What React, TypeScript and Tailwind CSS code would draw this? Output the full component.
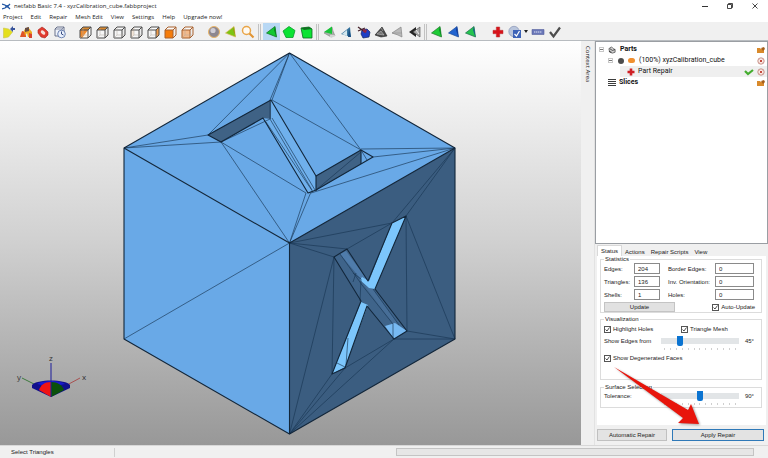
import React from "react";

const SANS = "font-['Open_Sans','Noto_Sans',sans-serif]";
const ARIAL = "font-['Liberation_Sans',Arial,sans-serif]";

function ToolButton({ label, active, children }: { label: string; active?: boolean; children: React.ReactNode }) {
  return (
    <button
      type="button"
      aria-label={label}
      className={`flex h-[17px] w-[17px] shrink-0 items-center justify-center ${active ? "bg-[#b8d8f4]" : ""}`}
    >
      <svg viewBox="0 0 14 14" className="h-[14px] w-[14px]">
        {children}
      </svg>
    </button>
  );
}

function ViewCube({ face }: { face: string }) {
  return (
    <>
      <path d="M2 5h8v8H2z" fill={face === "front" ? "#f57c0a" : face === "iso" ? "#f08a2c" : face === "fit" ? "#f3b98a" : "#f6f6f6"} />
      <path d="M2 5l3-3h8l-3 3z" fill={face === "top" || face === "iso" ? "#d9882e" : "#fafafa"} />
      <path d="M10 5l3-3v8l-3 3z" fill={face === "right" ? "#ee9a48" : face === "iso" ? "#ffffff" : "#ededed"} />
      {face === "iso" && <path d="M10 5v8H4z" fill="#fff3e4" />}
      {face === "left" && <path d="M2 5l3-3v8l-3 3z" fill="#f4e6d8" />}
      <path d="M2 5h8v8H2zM2 5l3-3h8l-3 3M13 2v8l-3 3" fill="none" stroke={face === "front" || face === "fit" ? "#a8602c" : "#4c4c4c"} strokeWidth="1" />
      {face !== "front" && <path d="M5 3v7h7M5 10l-3 3" fill="none" stroke="#b0a8a0" strokeWidth=".5" />}
    </>
  );
}

function Tri({ a, b, edge }: { a: string; b: string; edge: string }) {
  return (
    <>
      <path d="M1.500 8L10 1.500 11.500 12z" fill={a} stroke={edge} strokeWidth=".7" />
      <path d="M9 5L10 1.500 11.500 12z" fill={b} />
    </>
  );
}

function Separator() {
  return <div className="mx-0.5 h-4 w-[3px] shrink-0 border-x border-[#c2c2c2]" />;
}

function Toolbar() {
  return (
    <div role="toolbar" className="flex h-[19px] shrink-0 items-center overflow-hidden border-b border-[#b8bcc0] bg-[#f0f0f0] pt-px">
      <ToolButton label="Add part">
        <path d="M1.500 3l5 1 4 3-4 5-5 1z" fill="#e4df1c" stroke="#c9c44d" strokeWidth=".6" />
        <path d="M8 4l3-3v2h2v2h-2v2z" fill="#39549b" />
      </ToolButton>
      <ToolButton label="Library">
        <path d="M1 12l2-6 4 1v5z" fill="#df5426" />
        <path d="M5 5l4-3 4 5v5H9l-1-4-2 3z" fill="#edaa22" />
        <path d="M6 3l4-1v4l-4 1z" fill="#654c46" />
        <path d="M10 8l3 1v4h-3z" fill="#d9442f" />
      </ToolButton>
      <ToolButton label="Part repair">
        <path d="M2 5l4-3 3 2 3 3v3l-3 3-4-1-3-4z" fill="#e13b2f" stroke="#a4231c" strokeWidth=".6" />
        <ellipse cx="7" cy="7.500" rx="2.600" ry="1.700" transform="rotate(40 7 7.500)" fill="#f6ded8" />
      </ToolButton>
      <ToolButton label="History">
        <path d="M2 4l2-2h7v9H2z" fill="#eef2fa" stroke="#5b6480" strokeWidth=".9" />
        <path d="M2 4h7v7M9 4l2-2" fill="none" stroke="#5b6480" strokeWidth=".7" />
        <circle cx="8.500" cy="9" r="3.800" fill="#e9f0fc" stroke="#6077aa" strokeWidth=".9" />
        <path d="M8.500 6.500V9l2 1" fill="none" stroke="#364a82" />
      </ToolButton>
      <div className="w-2 shrink-0" />
      <ToolButton label="Isometric view"><ViewCube face="iso" /></ToolButton>
      <ToolButton label="View from top"><ViewCube face="top" /></ToolButton>
      <ToolButton label="View from bottom"><ViewCube face="none" /></ToolButton>
      <ToolButton label="View from left"><ViewCube face="left" /></ToolButton>
      <ToolButton label="View from right"><ViewCube face="right" /></ToolButton>
      <ToolButton label="View from front"><ViewCube face="front" /></ToolButton>
      <ToolButton label="View from back"><ViewCube face="fit" /></ToolButton>
      <div className="w-2.5 shrink-0" />
      <ToolButton label="Zoom all">
        <circle cx="7" cy="7" r="5.500" fill="#8d8790" stroke="#e8b466" strokeWidth="1" />
        <circle cx="6" cy="5.500" r="2.600" fill="#cfcdd6" />
      </ToolButton>
      <ToolButton label="Zoom part"><Tri a="#7cc412" b="#9a9a10" edge="#e0b860" /></ToolButton>
      <ToolButton label="Zoom">
        <circle cx="5.500" cy="5.500" r="4" fill="#fffaf2" stroke="#e9a548" strokeWidth="1.500" />
        <path d="M8.500 8.500l4 4" stroke="#e29432" strokeWidth="2.200" />
      </ToolButton>
      <Separator />
      <ToolButton label="Select triangles" active><Tri a="#12c832" b="#07801c" edge="#0a6e1c" /></ToolButton>
      <ToolButton label="Select surfaces">
        <path d="M7 1.500l6 4-2 7H4L1 6z" fill="#0be332" stroke="#0a9c28" strokeWidth=".8" />
      </ToolButton>
      <ToolButton label="Select shells">
        <path d="M2 3l8-1 3 2v9H4z" fill="#0be332" stroke="#0b6b1e" strokeWidth=".8" />
        <path d="M2 3l8-1 3 2-8 1z" fill="#126f22" />
      </ToolButton>
      <Separator />
      <ToolButton label="Add triangle">
        <path d="M1 8l8-6 1 4 2 5-4 1z" fill="#a8b0a8" stroke="#777" strokeWidth=".5" />
        <path d="M1 7l8-5.500V9z" fill="#17c437" />
        <path d="M7 11h5" stroke="#fff" />
      </ToolButton>
      <ToolButton label="Flip triangle">
        <path d="M1 9l9-7 1 10z" fill="#3b78a0" />
        <path d="M2 9l5-4v6z" fill="#d3e6ee" />
        <path d="M9 3l2 9H8z" fill="#174b80" />
      </ToolButton>
      <ToolButton label="Cut surface">
        <path d="M5 5l5-1 3 3-1 5-6 1-2-4z" fill="#1f3fc4" stroke="#132461" strokeWidth=".7" />
        <path d="M1 2l7 5M1 6l7-3" stroke="#44232c" strokeWidth="1.300" />
        <path d="M6 4l4 1-1 3-3-1z" fill="#8c2748" />
      </ToolButton>
      <ToolButton label="Refine mesh">
        <path d="M1 10l7-8 5 9-6 1z" fill="#4b4b4b" stroke="#222" strokeWidth=".6" />
        <path d="M3 9l4-3 3 4zM7 3l2 3" fill="#777" stroke="#ccc" strokeWidth=".5" />
      </ToolButton>
      <ToolButton label="Smooth mesh">
        <path d="M1 8l9-6 1 10-4-2z" fill="#b9b9b9" stroke="#858585" strokeWidth=".7" />
        <path d="M1 8l10 0" stroke="#8a8a8a" strokeWidth=".5" />
      </ToolButton>
      <ToolButton label="Extrude">
        <path d="M1 7l7-5v10z" fill="#252525" />
        <path d="M5 7l7-5v10z" fill="#aaa" stroke="#444" strokeWidth=".6" />
        <path d="M8 5l3 4" stroke="#efefef" />
      </ToolButton>
      <div className="mx-px h-4 w-[3px] shrink-0 border-x border-[#c2c2c2]" />
      <ToolButton label="Add to selection"><Tri a="#1ecb35" b="#0b8a24" edge="#20742a" /></ToolButton>
      <ToolButton label="Invert selection"><Tri a="#2163cf" b="#123a96" edge="#1a4793" /></ToolButton>
      <ToolButton label="Grow selection"><Tri a="#25c450" b="#155b8c" edge="#1b6b48" /></ToolButton>
      <div className="w-2.5 shrink-0" />
      <ToolButton label="Repair">
        <path d="M5.300 2h3.400v3.300H12v3.400H8.700V12H5.300V8.700H2V5.300h3.300z" fill="#d8121a" stroke="#b33" strokeWidth=".5" />
      </ToolButton>
      <ToolButton label="Repair options">
        <circle cx="6" cy="6.500" r="5.200" fill="#b9c5dc" stroke="#8793b5" strokeWidth=".7" />
        <path d="M5 5h8v8H5z" fill="#3c63b8" />
        <path d="M6.500 9l2 2 3-5" fill="none" stroke="#fff" strokeWidth="1.200" />
      </ToolButton>
      <button type="button" aria-label="More repair options" className="flex h-4 w-1.5 shrink-0 items-center justify-center">
        <svg viewBox="0 0 4 3" className="h-[3px] w-1"><path d="M0 0h4L2 3z" fill="#222" /></svg>
      </button>
      <ToolButton label="Measure">
        <path d="M1 4.500h12v5H1z" fill="#6a77b8" stroke="#54609c" strokeWidth=".6" />
        <path d="M3 7h8" stroke="#dfe4f5" strokeWidth="1.200" strokeDasharray="1.400 .6" />
      </ToolButton>
      <ToolButton label="Apply">
        <path d="M2 7l3.500 4.500L12 2.500" fill="none" stroke="#4d4d4d" strokeWidth="2.200" />
      </ToolButton>
    </div>
  );
}

function Viewport() {
  return (
    <div className="min-w-0 flex-1 bg-linear-to-b from-white via-[#d0d0d0] to-[#989898]">
      <svg viewBox="0 41 581 404" preserveAspectRatio="xMidYMid meet" className="h-full w-full">
        {/* cube faces */}
        <path d="M289.500 53L455 148 289.500 243 124 148z" fill="#69a9e7" />
        <path d="M124 148l165.500 95v191L124 339z" fill="#69a9e7" />
        <path d="M455 148v191l-165.500 95V243z" fill="#3b5d80" />
        {/* recessed Z */}
        <path d="M208 135l63-35v19l-8-1-42 24z" fill="#3f6285" />
        <path d="M272 100l44 76v15l-8 2-44-74 7 0z" fill="#6fb0ec" />
        <path d="M316 176l45-26v14l-45 26z" fill="#3f6285" />
        {/* recessed X */}
        <path d="M334 257l13-8 22 32 6 8 32 42-13 8-27-33-7-5z" fill="#3f648a" />
        <path d="M340 254l6-3 22 30-8-3z" fill="#4f7cab" />
        <path d="M364 285l9 4 26 36-6-1z" fill="#476e97" />
        <path d="M392 223l14-7-31 73-6-1-9-8 2-3 7 4z" fill="#7cc6fc" />
        <path d="M361 302l7 3-23 62-13 7z" fill="#7cc6fc" />
        <path d="M385 326l10-3 12 8-13 8z" fill="#77b9f2" />
        {/* mesh triangulation */}
        <g fill="none" stroke="#183654" strokeWidth=".65">
          <path d="M289.500 53L208 135M289.500 53L270 100M289.500 53L272 100M289.500 53L361 150" />
          <path d="M124 148L208 135M124 148L221 142M272 100L361 150M221 142L289.500 243M221 142L306 193" />
          <path d="M289.500 243L306 193M289.500 243L311 192M455 148L361 149M455 148L373 157M455 148L311 193" />
          <path d="M270 119L312 190M266 122L313 192M272 118L315 190M221 142L270 119M316 190L361 152M270 119V100M361 150L367 160" />
          <path d="M124 339L289.500 243M289.500 243L392 223M289.500 243L347 249M289.500 243L334 257M347 249L392 223" />
          <path d="M455 148L392 223M455 148L406 216M406 216L407 331M406 216L455 339M407 331L455 339M394 339L455 339" />
          <path d="M289.500 434L334 257M289.500 434L332 374M289.500 434L345 368M289.500 434L394 339M345 368L394 339M334 257L332 374" />
          <path d="M346 365L348 338M337 363L345 367M340 254L362 285M356 273L353 282M362 285L393 324M373 289L399 325M393 324V339M353 273L361 279 360 301" />
        </g>
        {/* feature outlines */}
        <g fill="none" stroke="#12263a" strokeWidth="1.100" strokeLinejoin="round">
          <path d="M208 135L271 100 316 176 361 150 373 157 316 190 308 193 263 118 221 142z" />
          <path d="M316 176v15M361 150v14" />
          <path d="M334 257L347 249 368 281 392 223 406 216 375 289 407 331 394 339 367 306 345 368 332 374 361 301z" />
          <path d="M289.500 53L455 148V339L289.500 434 124 339V148zM124 148L289.500 243 455 148M289.500 243V434" />
        </g>
        {/* orientation gizmo */}
        <path d="M36 385l-14-7" stroke="#3d7a3d" fill="none" />
        <path d="M67 385l13-7" stroke="#a85050" fill="none" />
        <path d="M32 385c4-6 34-6 38 0v3l-19 9-19-9z" fill="#10108c" />
        <path d="M37 384c5-4 23-4 28 0l-14 3z" fill="#1a1ad0" />
        <path d="M51 382c-7 0-10 3-12 8l12 7z" fill="#f01414" />
        <path d="M51 382c7 0 11 3 13 8l-13 7z" fill="#0a500a" />
        <path d="M51 397V363" stroke="#1c1c9c" fill="none" />
        <g className={SANS} fontSize="8" fill="#333">
          <text x="49" y="361">z</text>
          <text x="17" y="380">y</text>
          <text x="82" y="380">x</text>
        </g>
      </svg>
    </div>
  );
}

function Expander() {
  return (
    <span className="flex h-[5px] w-[5px] shrink-0 items-center justify-center border border-[#c8c8c8] bg-white">
      <span className="h-px w-[3px] bg-[#777]" />
    </span>
  );
}

function FolderIcon() {
  return (
    <svg viewBox="0 0 8 6" className="h-1.5 w-2 shrink-0">
      <path d="M0 1h3l1 1h3v4H0z" fill="#d98a2b" />
      <path d="M4 1l3-1 1 2-2 2z" fill="#a55e1b" />
    </svg>
  );
}

function TargetIcon() {
  return (
    <svg viewBox="0 0 8 8" className="h-2 w-2 shrink-0">
      <circle cx="4" cy="4" r="3.200" fill="#fbeae6" stroke="#b97a70" strokeWidth=".8" />
      <path d="M2.800 2.800l2.400 2.400M5.200 2.800L2.800 5.200" stroke="#c4493d" />
    </svg>
  );
}

function PartTree() {
  return (
    <ul role="tree" className="h-[203px] shrink-0 border border-[#9a9ea3] bg-white pt-0.5 font-['Roboto','Open_Sans',sans-serif] text-[7px] leading-[11px] text-[#111]">
      <li role="treeitem" className="flex h-[11px] items-center pr-0.5 pl-[3px]">
        <Expander />
        <svg viewBox="0 0 9 9" className="mx-1 h-2 w-2 shrink-0">
          <path d="M1 3l3-2 2 2 2 1v3L5 8 2 7z" fill="#d0d0d0" stroke="#444" strokeWidth=".8" />
          <path d="M2 3l3 2 3-1M1 6l3 1" stroke="#333" fill="none" strokeWidth=".9" />
        </svg>
        <span className="flex-1 font-bold">Parts</span>
        <FolderIcon />
      </li>
      <li role="treeitem" className="flex h-[11px] items-center gap-1 pr-0.5 pl-3">
        <Expander />
        <span className="ml-px h-1.5 w-1.5 shrink-0 rounded-full bg-[#4c4c4c]" />
        <span className="h-[5px] w-[7px] shrink-0 rounded-full bg-[#f09030]" />
        <span className="flex-1 whitespace-nowrap">(100%) xyzCalibration_cube</span>
        <TargetIcon />
      </li>
      <li role="treeitem" aria-selected="true" className="ml-6 flex h-[11px] items-center gap-[3px] bg-[#efefef] pr-0.5 pl-[7px]">
        <svg viewBox="0 0 8 8" className="h-2 w-2 shrink-0"><path d="M2.700.500h2.600v2.200h2.200v2.600H5.300v2.200H2.700V5.300H.500V2.700h2.200z" fill="#cf1f24" /></svg>
        <span className="flex-1">Part Repair</span>
        <svg viewBox="0 0 10 8" className="h-2 w-2.5 shrink-0"><path d="M1 3l3 3 5-4" fill="none" stroke="#45ad2f" strokeWidth="2.200" /></svg>
        <TargetIcon />
      </li>
      <li role="treeitem" className="flex h-[11px] items-center pr-0.5 pl-3">
        <svg viewBox="0 0 8 8" className="mr-[3px] h-2 w-2 shrink-0"><path d="M0 .500h8M0 2.500h8M0 4.500h8M0 6.500h8" stroke="#3c3c3c" strokeWidth="1" /></svg>
        <span className="flex-1 font-bold">Slices</span>
        <FolderIcon />
      </li>
    </ul>
  );
}

function StatField({ id, label, value, wide }: { id: string; label: string; value: string; wide?: boolean }) {
  return (
    <>
      <label htmlFor={id} className="whitespace-nowrap">{label}</label>
      <input
        id={id}
        type="text"
        defaultValue={value}
        className={`h-[11px] border border-[#8a8a8a] bg-white px-[3px] text-[6px] leading-[9px] ${wide ? "w-[39px]" : "w-[26px]"}`}
      />
    </>
  );
}

function Check({ label }: { label: string }) {
  return (
    <label className="flex items-center gap-0.5 whitespace-nowrap">
      <span className="grid h-[7px] w-[7px] shrink-0">
        <input type="checkbox" defaultChecked className="peer col-start-1 row-start-1 h-[7px] w-[7px] appearance-none border border-[#555] bg-white" />
        <svg viewBox="0 0 7 7" className="pointer-events-none invisible col-start-1 row-start-1 h-[7px] w-[7px] peer-checked:visible">
          <path d="M1.500 3.500L3 5l2.500-3.500" fill="none" stroke="#222" strokeWidth=".8" />
        </svg>
      </span>
      {label}
    </label>
  );
}

function Slider({ id, label, value, text }: { id: string; label: string; value: number; text: string }) {
  return (
    <div className="grid grid-cols-[57px_78px_1fr] items-center">
      <label htmlFor={id} className="whitespace-nowrap">{label}</label>
      <input
        id={id}
        type="range"
        min={0}
        max={180}
        defaultValue={value}
        className="h-[10px] w-full appearance-none bg-transparent [&::-webkit-slider-runnable-track]:h-[6px] [&::-webkit-slider-runnable-track]:bg-[#e2e5e7] [&::-webkit-slider-thumb]:mt-[-2px] [&::-webkit-slider-thumb]:h-[10px] [&::-webkit-slider-thumb]:w-[6px] [&::-webkit-slider-thumb]:appearance-none [&::-webkit-slider-thumb]:rounded-b-[2px] [&::-webkit-slider-thumb]:bg-[#0b74d1]"
      />
      <span className="pr-1 text-right">{text}</span>
      <div className="col-start-2 mx-[3px] flex h-1 items-end justify-between">
        {Array.from({ length: 13 }, (_, i) => (
          <span key={i} className="h-0.5 w-px bg-[#cfcfcf]" />
        ))}
      </div>
    </div>
  );
}

function Group({ title, className, children }: { title: string; className: string; children: React.ReactNode }) {
  return (
    <fieldset className={`min-w-0 border border-[#dcdcdc] px-[3px] ${className}`}>
      <legend className="h-[7px] px-px leading-[7px]">{title}</legend>
      {children}
    </fieldset>
  );
}

function RepairPanel() {
  return (
    <div className={`relative flex flex-1 flex-col px-0.5 text-[6px] leading-[8px] text-[#222] ${ARIAL}`}>
      <div role="tablist" className="mt-px flex h-[11px] items-end text-[6px]">
        <button role="tab" aria-selected="true" type="button" className="h-[11px] border border-b-0 border-[#d9d9d9] bg-white px-[3px]">Status</button>
        <button role="tab" type="button" className="h-[9px] px-[3px]">Actions</button>
        <button role="tab" type="button" className="h-[9px] px-[3px]">Repair Scripts</button>
        <button role="tab" type="button" className="h-[9px] px-[3px]">View</button>
      </div>
      <div className="flex h-[169px] shrink-0 flex-col bg-white pr-1 pl-[3px]">
        <Group title="Statistics" className="h-[57px]">
          <div className="grid grid-cols-[30px_34px_47px_39px] items-center gap-y-[2px]">
            <StatField id="edges" label="Edges:" value="204" />
            <StatField id="border" label="Border Edges:" value="0" wide />
            <StatField id="triangles" label="Triangles:" value="136" />
            <StatField id="orientation" label="Inv. Orientation:" value="0" wide />
            <StatField id="shells" label="Shells:" value="1" />
            <StatField id="holes" label="Holes:" value="0" wide />
          </div>
          <div className="mt-0.5 flex items-center justify-between pr-[3px]">
            <button type="button" className="h-[10px] w-[71px] border border-[#c4c4c4] bg-[#e1e1e1] leading-[8px]">Update</button>
            <Check label="Auto-Update" />
          </div>
        </Group>
        <Group title="Visualization" className="mt-[3px] h-[64px]">
          <div className="mt-0.5 mb-[3px] grid h-[8px] grid-cols-2 items-center">
            <Check label="Highlight Holes" />
            <Check label="Triangle Mesh" />
          </div>
          <Slider id="edges-from" label="Show Edges from" value={40} text="45°" />
          <div className="mt-1"><Check label="Show Degenerated Faces" /></div>
        </Group>
        <Group title="Surface Selection" className="mt-[4px] h-[24px]">
          <Slider id="tolerance" label="Tolerance:" value={90} text="90°" />
        </Group>
      </div>
      <div className="mt-1 flex h-3 gap-[5px] pr-0.5">
        <button type="button" className="w-[70px] border border-[#c0c0c0] bg-[#e3e3e3] leading-[8px]">Automatic Repair</button>
        <button type="button" className="flex-1 border border-[#2f79b8] bg-[#e3e3e3] leading-[8px]">Apply Repair</button>
      </div>
      {/* annotation arrow laid over the panel */}
      <svg viewBox="0 0 90 62" className="pointer-events-none absolute top-[121px] left-[17px] h-[62px] w-[90px] drop-shadow-[1px_1px_1px_rgba(0,0,0,0.4)]">
        <path d="M2 2L76 45 79 39 87 59 66 58 71 53z" fill="#e8150c" />
      </svg>
    </div>
  );
}

export default function App() {
  return (
    <div className={`flex h-screen flex-col overflow-hidden bg-[#f0f0f0] text-[6px] text-[#222] ${SANS}`}>
      <header className="shrink-0 bg-white">
        <div className="flex h-3 items-center gap-[3px] pl-0.5">
          <svg viewBox="0 0 9 7" className="h-[7px] w-[9px]">
            <path d="M0 1l3 1 2 2 3-3M0 6l3-1 2-2 3 3" fill="none" stroke="#2358a5" strokeWidth="1.300" />
          </svg>
          <h1 className="flex-1 leading-3">netfabb Basic 7.4 - xyzCalibration_cube.fabbproject</h1>
          <div className="flex items-center gap-[19px] pr-[10px]">
            <button type="button" aria-label="Minimize" className="flex h-2 w-1.5 items-center"><span className="h-px w-full bg-[#333]" /></button>
            <button type="button" aria-label="Restore">
              <svg viewBox="0 0 6 6" className="h-1.5 w-1.5"><path d="M.500 1.500h4v4h-4zM1.500 1.500v-1h4v4h-1" fill="none" stroke="#333" strokeWidth=".9" /></svg>
            </button>
            <button type="button" aria-label="Close">
              <svg viewBox="0 0 6 6" className="h-1.5 w-1.5"><path d="M.500.500l5 5M5.500.500l-5 5" stroke="#333" strokeWidth=".9" /></svg>
            </button>
          </div>
        </div>
        <nav className="flex h-[10px] items-center gap-2 pl-[3px] leading-[10px]">
          {["Project", "Edit", "Repair", "Mesh Edit", "View", "Settings", "Help", "Upgrade now!"].map((item) => (
            <button key={item} type="button" className="whitespace-nowrap">{item}</button>
          ))}
        </nav>
      </header>
      <Toolbar />
      <main className="flex min-h-0 flex-1">
        <Viewport />
        <div className="flex w-[14px] shrink-0 justify-center border-r border-[#e2e2e2] pt-[5px]">
          <span className="h-fit leading-[12px] [writing-mode:vertical-rl]">Context Area</span>
        </div>
        <aside className="flex w-[173px] shrink-0 flex-col">
          <PartTree />
          <RepairPanel />
        </aside>
      </main>
      <footer className={`flex h-[13px] shrink-0 items-center border-t border-[#d8d8d8] pr-[14px] pl-[11px] ${ARIAL}`}>
        <span className="h-[9px] w-[104px] border-r border-[#d0d0d0] leading-[9px]">Select Triangles</span>
        <div className="flex-1" />
        <div role="progressbar" aria-label="Progress" className="h-2 w-[358px] border border-[#c4c4c4] bg-[#e6e6e6]" />
      </footer>
    </div>
  );
}
